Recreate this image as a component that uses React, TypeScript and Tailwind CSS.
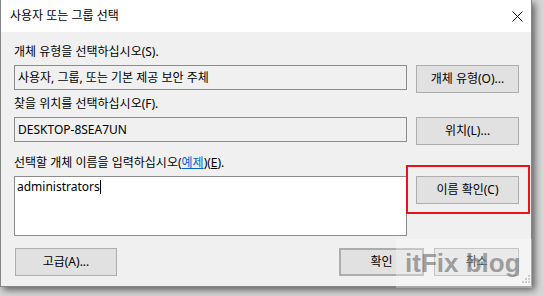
import React from "react";

const btn =
  "flex items-center justify-center h-[28px] bg-[#e1e1e1] border border-[#adadad] text-[12px] leading-[16px] text-black";

export default function App() {
  return (
    <div className="relative w-[543px] h-[296px] bg-[#d6d6d6] overflow-hidden [font-family:'Noto_Sans','Noto_Sans_CJK_KR',sans-serif] text-black">
      <div className="relative w-[532px] h-[287px] bg-[#f0f0f0] border-x border-b border-[#858585] shadow-[3px_3px_7px_rgba(0,0,0,0.55)] flex flex-col">
        {/* Title bar */}
        <div className="h-[32px] bg-white flex items-center pl-[9px] pr-[8px] shrink-0">
          <span className="text-[12px] leading-[16px] flex-1">사용자 또는 그룹 선택</span>
          <svg width="11" height="11" viewBox="0 0 11 11" className="mr-[0px]">
            <path d="M0.5 0.5 L10.5 10.5 M10.5 0.5 L0.5 10.5" stroke="#111" strokeWidth="1" fill="none" />
          </svg>
        </div>

        {/* Body */}
        <div className="flex flex-col pl-[13px] pr-[12px] pt-[12px] text-[12px] leading-[16px]">
          <div className="h-[16px]">개체 유형을 선택하십시오(S).</div>
          <div className="mt-[5px] flex items-start gap-[9px]">
            <div className="flex-1 h-[25px] border border-[#8c8c8c] bg-[#f0f0f0] flex items-center pl-[3px]">
              사용자, 그룹, 또는 기본 제공 보안 주체
            </div>
            <div className={`${btn} w-[103px]`}>개체 유형(O)...</div>
          </div>

          <div className="mt-[3px] h-[16px]">찾을 위치를 선택하십시오(F).</div>
          <div className="mt-[5px] flex items-start gap-[9px]">
            <div className="flex-1 h-[25px] border border-[#8c8c8c] bg-[#f0f0f0] flex items-center pl-[3px]">
              DESKTOP-8SEA7UN
            </div>
            <div className={`${btn} w-[103px]`}>위치(L)...</div>
          </div>

          <div className="mt-[10px] h-[16px]">
            선택할 개체 이름을 입력하십시오(
            <span className="text-[#0066cc] underline">예제</span>)(<span className="underline">E</span>).
          </div>
          <div className="mt-[5px] flex items-start gap-[9px]">
            <div className="flex-1 h-[60px] border border-[#8c8c8c] bg-white pl-[2px] pt-[2px]">
              <span>administrators</span>
              <span className="inline-block w-px h-[14px] bg-black align-[-3px]" />
            </div>
            <div className="relative w-[103px]">
              <div className={`${btn} w-[103px]`}>이름 확인(C)</div>
              <div className="absolute left-[-10px] right-[-11px] top-[-11px] bottom-[-10px] border-2 border-[#e8141c]" />
            </div>
          </div>

          <div className="mt-[12px] flex items-start">
            <div className={`${btn} w-[102px] ml-px`}>고급(A)...</div>
            <div className="flex-1" />
            <div className={`${btn} w-[85px] border-2 border-[#0078d7]`}>확인</div>
            <div className={`${btn} w-[85px] ml-[10px]`}>취소</div>
          </div>
        </div>

        {/* size grip */}
        <svg width="8" height="8" viewBox="0 0 8 8" className="absolute left-[521px] top-[275px]">
          <rect x="6" y="0" width="2" height="2" fill="#b8b8b8" />
          <rect x="3" y="3" width="2" height="2" fill="#b8b8b8" />
          <rect x="6" y="3" width="2" height="2" fill="#b8b8b8" />
          <rect x="0" y="6" width="2" height="2" fill="#b8b8b8" />
          <rect x="3" y="6" width="2" height="2" fill="#b8b8b8" />
          <rect x="6" y="6" width="2" height="2" fill="#b8b8b8" />
        </svg>
      </div>

      {/* watermark */}
      <div className="absolute left-[396px] top-[239px] w-[136px] h-[49px] bg-[rgba(255,255,255,0.3)]" />
      <div className="absolute left-[405px] top-[248px] text-[26px] leading-[30px] font-bold [font-family:'Liberation_Sans',Arial,sans-serif] text-[rgba(105,105,105,0.6)] whitespace-nowrap">
        itFix blog
      </div>
    </div>
  );
}
